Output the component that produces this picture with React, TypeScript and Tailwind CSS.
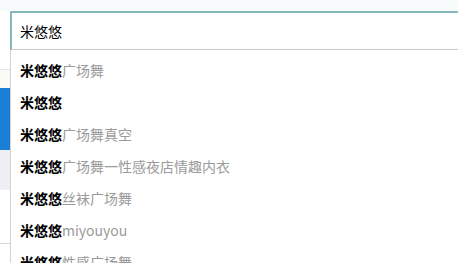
import React from "react";

const rows: { tail: string }[] = [
  { tail: "广场舞" },
  { tail: "" },
  { tail: "广场舞真空" },
  { tail: "广场舞一性感夜店情趣内衣" },
  { tail: "丝袜广场舞" },
  { tail: "miyouyou" },
  { tail: "性感广场舞" },
];

export default function App() {
  return (
    <div
      className="w-[458px] h-[263px] overflow-hidden bg-white flex flex-col"
      style={{ fontFamily: '"Noto Sans CJK SC", "Microsoft YaHei", sans-serif' }}
    >
      <div className="h-[11px] shrink-0 bg-[#f7fbfb]" />
      <div className="flex flex-1 min-h-0">
        <div className="w-[10px] shrink-0 flex flex-col">
          <div className="h-[59px] bg-white border-b border-[#e6e6e6]" />
          <div className="h-[18px] bg-[#fbfbf6]" />
          <div className="h-[62px] bg-[#1a7fd6]" />
          <div className="h-[40px] bg-[#efeef4]" />
          <div className="h-[54px] bg-white border-b border-[#d6d6d6]" />
          <div className="flex-1 bg-white" />
        </div>
        <div className="flex-1 min-w-0 flex flex-col">
          <div className="h-[39px] shrink-0 border-t-2 border-l-2 border-[#86b8bb] border-b border-b-[#c9c9c9] flex items-center pl-[8px] text-[14px] text-black">
            米悠悠
          </div>
          <div className="flex-1 border-l border-[#d4d4d4] pt-[4px]">
            {rows.map((r, i) => (
              <div key={i} className="h-[32px] flex items-center pl-[9px] text-[14px] whitespace-nowrap">
                <span className="font-bold text-black">米悠悠</span>
                <span className="text-[#9a9a9a]">{r.tail}</span>
              </div>
            ))}
          </div>
        </div>
      </div>
    </div>
  );
}
